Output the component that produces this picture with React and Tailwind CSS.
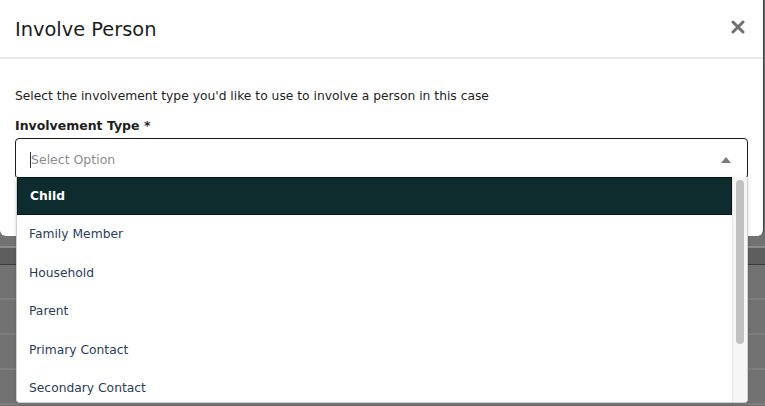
import { useState } from "react"

const options = [
  "Child",
  "Family Member",
  "Household",
  "Parent",
  "Primary Contact",
  "Secondary Contact",
]

export default function App() {
  const [active] = useState("Child")

  return (
    <div
      className="relative w-[765px] h-[406px] overflow-hidden bg-[#727272]"
      style={{ fontFamily: '"DejaVu Sans", Verdana, sans-serif' }}
    >
      {/* page behind the overlay */}
      <div className="flex flex-col">
        <div className="h-[246px]" />
        <div className="h-[2px] bg-[#8a8a8a]" />
        <div className="h-[17px] bg-[#5e5e5e] border-b border-[#3a3a3a]" />
        {[0, 1, 2, 3, 4].map(i => (
          <div key={i} className="h-[35px] border-b-2 border-[#7e7e7e]" />
        ))}
      </div>

      {/* modal */}
      <div className="absolute left-0 top-0 w-[764px] h-[236px] bg-white rounded-b-[6px] border-r border-[#3c3c3c] flex flex-col">
        <div className="h-[59px] shrink-0 flex items-center justify-between pl-[15px] pr-[18px] border-b-2 border-[#e8e8ea]">
          <h1 className="text-[19.4px] text-[#1c1c1c] leading-none mt-[3px]">Involve Person</h1>
          <svg width="14" height="14" viewBox="0 0 14 14" className="mt-[-4px]">
            <path d="M2 2 L12 12 M12 2 L2 12" stroke="#6f6f6f" strokeWidth="3" strokeLinecap="round" />
          </svg>
        </div>

        <div className="flex flex-col px-[15px] pt-[27px]">
          <p className="text-[12.3px] leading-[20px] text-[#1e1e1e]">
            Select the involvement type you'd like to use to involve a person in this case
          </p>
          <label className="mt-[10px] text-[12.5px] leading-[20px] font-bold text-[#1e1e1e]">
            Involvement Type *
          </label>
          <div className="mt-[2px] w-[733px] h-[41px] border border-[#1c1c1c] rounded-[4px] flex items-center pl-[14px] pr-[16px] justify-between">
            <div className="flex items-center mt-[3px]">
              <span className="w-px h-[16px] bg-[#333]" />
              <span className="text-[12.5px] text-[#8c8c8c]">Select Option</span>
            </div>
            <svg width="10" height="6" viewBox="0 0 10 6" className="mt-[2px]">
              <path d="M0 6 L5 0 L10 6 Z" fill="#7a7a7a" />
            </svg>
          </div>
          <div className="mt-[12px] self-end w-[14px] h-[28px] border border-[#d6d6d6] rounded-[3px]" />
        </div>
      </div>

      {/* dropdown list */}
      <div className="absolute left-[16px] top-[177px] w-[732px] h-[226px] bg-white border border-t-0 border-[#d0d0d0] rounded-b-[4px] overflow-hidden flex shadow-[0_2px_4px_rgba(0,0,0,0.15)]">
        <ul className="flex-1 flex flex-col">
          {options.map(o => (
            <li
              key={o}
              className={`h-[38.4px] shrink-0 flex items-center pl-[12px] text-[12.3px] ${
                o === active
                  ? "bg-[#0e2b2e] text-white font-bold border border-[#05191b]"
                  : "text-[#2b3d58]"
              }`}
            >
              {o}
            </li>
          ))}
        </ul>
        <div className="w-[15px] shrink-0 bg-[#f6f6f6] border-l border-[#e6e6e6] flex justify-center pt-[3px]">
          <div className="w-[8px] h-[164px] rounded-full bg-[#c1c1c1]" />
        </div>
      </div>
    </div>
  )
}
